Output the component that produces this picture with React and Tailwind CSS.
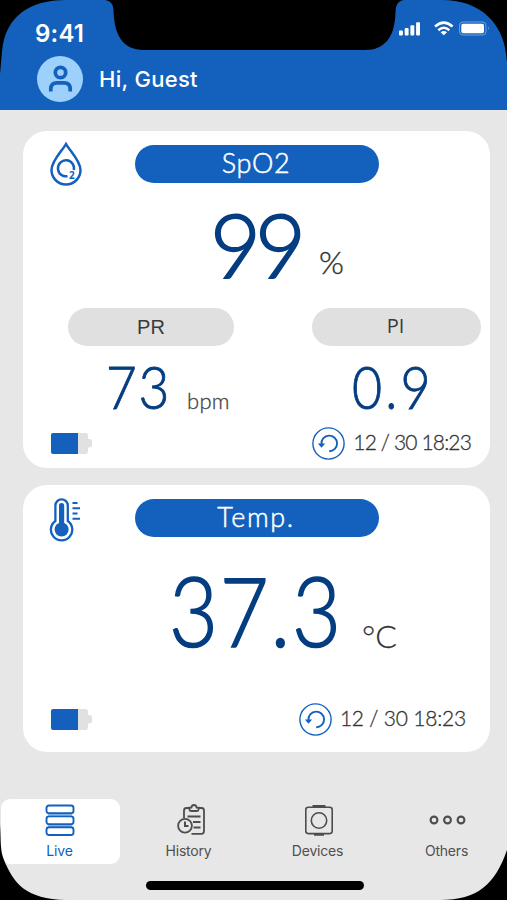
const navItems = [
  { id: "live", label: "Live", Icon: LiveIcon },
  { id: "history", label: "History", Icon: HistoryIcon },
  { id: "devices", label: "Devices", Icon: DevicesIcon },
  { id: "others", label: "Others", Icon: OthersIcon },
];

function PhoneFrame() {
  return (
    <svg className="pointer-events-none absolute inset-0" width="507" height="900" viewBox="0 0 507 900">
      {/* Corners */}
      <path d="M0 0H66C30 0 5 16 2 52L0 74Z" />
      <path d="M507 0H442C482 0 503 25 506 54L507 62Z" />
      <path d="M0 824C1 842 0 850 4 860C14 884 26 899 66 900H0Z" />
      <path d="M507 850C495 884 478 900 440 900H507Z" />
      {/* Notch */}
      <path d="M105 0C111 1 113 4 113.500 10C114 34 122 50 144 50H365C385 50 395 37 395.500 12C396 4 398 1 404 0Z" />
    </svg>
  );
}

function StatusIcons() {
  return (
    <svg width="94" height="18" viewBox="0 0 94 18" fill="white">
      <rect x="1" y="11.500" width="3.900" height="5" rx="1" />
      <rect x="6.700" y="9" width="3.900" height="7.500" rx="1" />
      <rect x="12.400" y="6.300" width="3.900" height="10.200" rx="1" />
      <rect x="18.100" y="3.300" width="3.900" height="13.200" rx="1" />
      <g fill="none" stroke="white" strokeWidth="2.500">
        <path d="M37 7.500Q45.800 -0.300 54.600 7.500" />
        <path d="M40.300 11.200Q45.800 6.400 51.300 11.200" />
      </g>
      <path d="M42.600 13.200Q45.800 10.600 49 13.200L45.800 16.200Z" />
      <rect x="61.500" y="3" width="26.500" height="13" rx="3.500" fill="none" stroke="white" strokeOpacity="0.4" />
      <rect x="63.300" y="4.800" width="22.700" height="9.400" rx="1.800" />
      <path d="M90 7.500Q91.600 9.200 90 11Z" opacity="0.5" />
    </svg>
  );
}

function UserIcon() {
  return (
    <svg width="46" height="46" viewBox="0 0 46 46" fill="none" stroke="#1461bd" strokeWidth="3.700">
      <circle cx="23.500" cy="16.500" r="5.200" />
      <path d="M13.800 35.500V33Q13.800 26.800 20 26.800H27Q33.200 26.800 33.200 33V35.500" />
    </svg>
  );
}

function DropIcon() {
  return (
    <svg className="-ml-px mr-px -mt-[3px]" width="32" height="44" viewBox="0 0 32 44" fill="none" stroke="#1461bd" strokeWidth="2.500">
      <path d="M16 2C12 9 1.500 19 1.500 28A14.500 14.500 0 0 0 30.500 28C30.500 19 20 9 16 2Z" />
      <path d="M17.500 34.200A8 8 0 1 1 23.800 28" />
      <text x="19" y="37" fill="#1461bd" stroke="none" className="font-['Open_Sans',sans-serif] text-[10px] font-bold">2</text>
    </svg>
  );
}

function ThermoIcon() {
  return (
    <svg className="-ml-0.5 mr-0.5 -mt-0.5" width="32" height="45" viewBox="0 0 32 45" fill="none" stroke="#1461bd">
      <path d="M6.400 24V8.500A6.200 6.200 0 0 1 18.800 8.500V24A10.700 10.700 0 1 1 6.400 24Z" strokeWidth="2.300" />
      <path d="M12.600 8.500V30" strokeWidth="5.200" strokeLinecap="round" />
      <circle cx="12.600" cy="32.500" r="7" fill="#1461bd" stroke="none" />
      <path d="M23.500 6H28.500M23.500 11.300H31M23.500 16.500H28.500M23.500 21.800H31" strokeWidth="2" />
    </svg>
  );
}

function BatteryIcon() {
  return (
    <svg width="41" height="21" viewBox="0 0 41 21">
      <path d="M3 0H34.500Q37 0 37 3V6H38.500Q41 6 41 8V12.500Q41 14.500 38.500 14.500H37V18Q37 21 34.500 21H3Z" fill="#e1e1e1" />
      <path d="M2 0H27V21H2Q0 21 0 19V2Q0 0 2 0Z" fill="#1461bd" />
    </svg>
  );
}

function RefreshIcon() {
  return (
    <svg width="33" height="33" viewBox="0 0 33 33" fill="none" stroke="#1461bd">
      <circle cx="16.500" cy="16.500" r="15.600" strokeWidth="1.400" />
      <path d="M9.500 17A7.800 7.800 0 1 1 17.200 24.200" strokeWidth="1.900" />
      <path d="M5.800 16.600H13.200L9.500 20.700Z" fill="#1461bd" stroke="none" />
    </svg>
  );
}

function LiveIcon() {
  return (
    <svg width="30" height="32" viewBox="0 0 30 32" fill="none" stroke="#1461bd" strokeWidth="1.900">
      <path d="M3 10.800H27M3 21.700H27" stroke="#9dccf2" />
      <rect x="1.500" y="1.500" width="27" height="7.800" rx="2.500" />
      <rect x="1.500" y="12.400" width="27" height="7.800" rx="2.500" />
      <rect x="1.500" y="23.200" width="27" height="7.800" rx="2.500" />
    </svg>
  );
}

function HistoryIcon() {
  return (
    <svg className="ml-1.5" width="30" height="32" viewBox="0 0 30 32" fill="none" stroke="#4d4d4d" strokeWidth="1.800">
      <path d="M7 14V6.500Q7 4 9.500 4H12M22 4H24.500Q27 4 27 6.500V27Q27 29.800 24.500 29.800H14.500" />
      <path d="M12.500 5.800V3.600H14.400Q14.800 1 17 1T19.600 3.600H21.500V5.800Q21.500 7 20 7H14Q12.500 7 12.500 5.800Z" />
      <circle cx="8" cy="21.800" r="6.900" />
      <path d="M8 17.500V22H11.500" strokeWidth="2" />
      <path d="M10.500 12.500H23.500M16 18H23.500M16.500 23.500H23.500" />
    </svg>
  );
}

function DevicesIcon() {
  return (
    <svg className="ml-0.5" width="30" height="32" viewBox="0 0 30 32" fill="none" stroke="#4d4d4d" strokeWidth="1.600">
      <rect x="1.800" y="3.200" width="26.400" height="26.400" rx="2.500" />
      <circle cx="15" cy="16.500" r="7.700" />
      <path d="M8.500 1.900H21.500M10 30.700H20" strokeWidth="2" />
    </svg>
  );
}

function OthersIcon() {
  return (
    <svg className="ml-0.5" width="37" height="32" viewBox="0 0 37 32" fill="none" stroke="#4d4d4d" strokeWidth="2.100">
      <circle cx="5" cy="16" r="3.400" />
      <circle cx="18.500" cy="16" r="3.400" />
      <circle cx="32" cy="16" r="3.400" />
    </svg>
  );
}

function Title({ children, className }) {
  return (
    <h2 className={`ml-[52px] flex h-[38px] w-[244px] justify-center rounded-full bg-[#1461bd] pr-0.5 font-['Lato',sans-serif] text-[27px] font-light leading-[35px] text-white [-webkit-text-stroke:0.5px_white] ${className}`}>
      {children}
    </h2>
  );
}

function CardFooter({ time, className, timeClassName }) {
  return (
    <div className={`flex items-center justify-between pl-7 ${className}`}>
      <BatteryIcon />
      <div className="flex items-center gap-2">
        <RefreshIcon />
        <span className={`-mt-1 whitespace-nowrap font-['Lato',sans-serif] text-[21px] font-light leading-[33px] text-[#333] [-webkit-text-stroke:0.3px_#333] ${timeClassName}`}>{time}</span>
      </div>
    </div>
  );
}

function SpO2Card() {
  return (
    <section className="ml-[23px] mt-[21px] h-[337px] w-[467px] rounded-[24px] bg-white pt-3.5">
      <div className="flex h-11 pl-7">
        <DropIcon />
        <Title className="tracking-[0.6px]">SpO2</Title>
      </div>
      <div className="flex h-[114px] items-baseline pl-[187px] font-['Lato',sans-serif]">
        <span className="w-[109px] text-[88px] font-light leading-[110px] tracking-[-6px] text-[#043d80] [-webkit-text-stroke:1.8px_#043d80]">99</span>
        <span className="relative -top-1 text-[32px] font-light text-[#333] [-webkit-text-stroke:0.4px_#333]">%</span>
      </div>
      <div className="mt-[5px] flex justify-between pl-[45px] pr-[9px] text-[20px] text-[#3a3a3a]">
        <div className="h-[38px] w-[166px] rounded-full bg-[#e0e0e0] text-center font-['Liberation_Sans',sans-serif] leading-[39px]">PR</div>
        <div className="h-[38px] w-[169px] rounded-full bg-[#e0e0e0] pr-0.5 text-center font-['Open_Sans',sans-serif] leading-[36px]">PI</div>
      </div>
      <div className="flex h-[81px] items-baseline pl-[83px] font-['Lato',sans-serif]">
        <span className="w-[81px] origin-left scale-x-90 text-[59px] font-light leading-[81px] tracking-[2px] text-[#043d80] [-webkit-text-stroke:0.9px_#043d80]">73</span>
        <span className="w-[165px] text-[22px] font-light tracking-[0.3px] text-[#444] [-webkit-text-stroke:0.3px_#444]">bpm</span>
        <span className="origin-left scale-x-[0.88] text-[59px] font-light leading-[81px] tracking-[3.5px] text-[#043d80] [-webkit-text-stroke:0.9px_#043d80]">0.9</span>
      </div>
      <CardFooter time="12 / 30 18:23" className="pr-[19px]" timeClassName="tracking-[-0.850px]" />
    </section>
  );
}

function TempCard() {
  return (
    <section className="ml-[23px] mt-[17px] h-[267px] w-[467px] rounded-[24px] bg-white pt-3.5">
      <div className="flex h-11 pl-7">
        <ThermoIcon />
        <Title className="tracking-[1.600px]">Temp.</Title>
      </div>
      <div className="flex h-[160px] items-baseline pl-[146px] font-['Lato',sans-serif]">
        <span className="w-[193px] origin-left scale-x-[0.88] text-[96px] font-light leading-[134px] tracking-[2px] text-[#043d80] [-webkit-text-stroke:1.6px_#043d80]">37.3</span>
        <span className="relative top-px text-[32px] font-light text-[#333] [-webkit-text-stroke:0.3px_#333]">°C</span>
      </div>
      <CardFooter time="12 / 30 18:23" className="pr-6" timeClassName="tracking-[-0.200px]" />
    </section>
  );
}

function NavItem({ item, active }) {
  const { label, Icon } = item;
  return (
    <button className={`flex h-[65px] w-[119px] flex-col items-center rounded-[9px] pr-0.5 pt-[5px] ${active ? "bg-white text-[#1461bd]" : "text-[#505050]"}`}>
      <Icon />
      <span className="mt-1.5 font-['Inter',sans-serif] text-[14px] leading-[18px] tracking-[-0.200px]">{label}</span>
    </button>
  );
}

export default function App() {
  return (
    <main className="relative h-[900px] w-[507px] overflow-hidden bg-[#e7e7e7]">
      <header className="h-[110px] bg-[#1461bd] text-white">
        <div className="flex h-[56px] justify-between pl-[35px] pr-[15px] pt-[19px]">
          <span className="font-['Inter',sans-serif] text-[24px] font-semibold leading-[29px] tracking-[0.200px]">9:41</span>
          <StatusIcons />
        </div>
        <div className="flex items-center gap-4 pl-[37px]">
          <div className="size-[46px] rounded-full bg-[#9dd0fa]">
            <UserIcon />
          </div>
          <span className="font-['Inter',sans-serif] text-[22px] font-medium tracking-[0.300px]">Hi, Guest</span>
        </div>
      </header>

      <SpO2Card />
      <TempCard />

      <nav className="mt-[47px] flex gap-[10px] pl-px">
        {navItems.map((item) => (
          <NavItem key={item.id} item={item} active={item.id === "live"} />
        ))}
      </nav>
      <div className="ml-[146px] mt-[17px] h-[9px] w-[218px] rounded-full bg-black" />

      <PhoneFrame />
    </main>
  );
}
